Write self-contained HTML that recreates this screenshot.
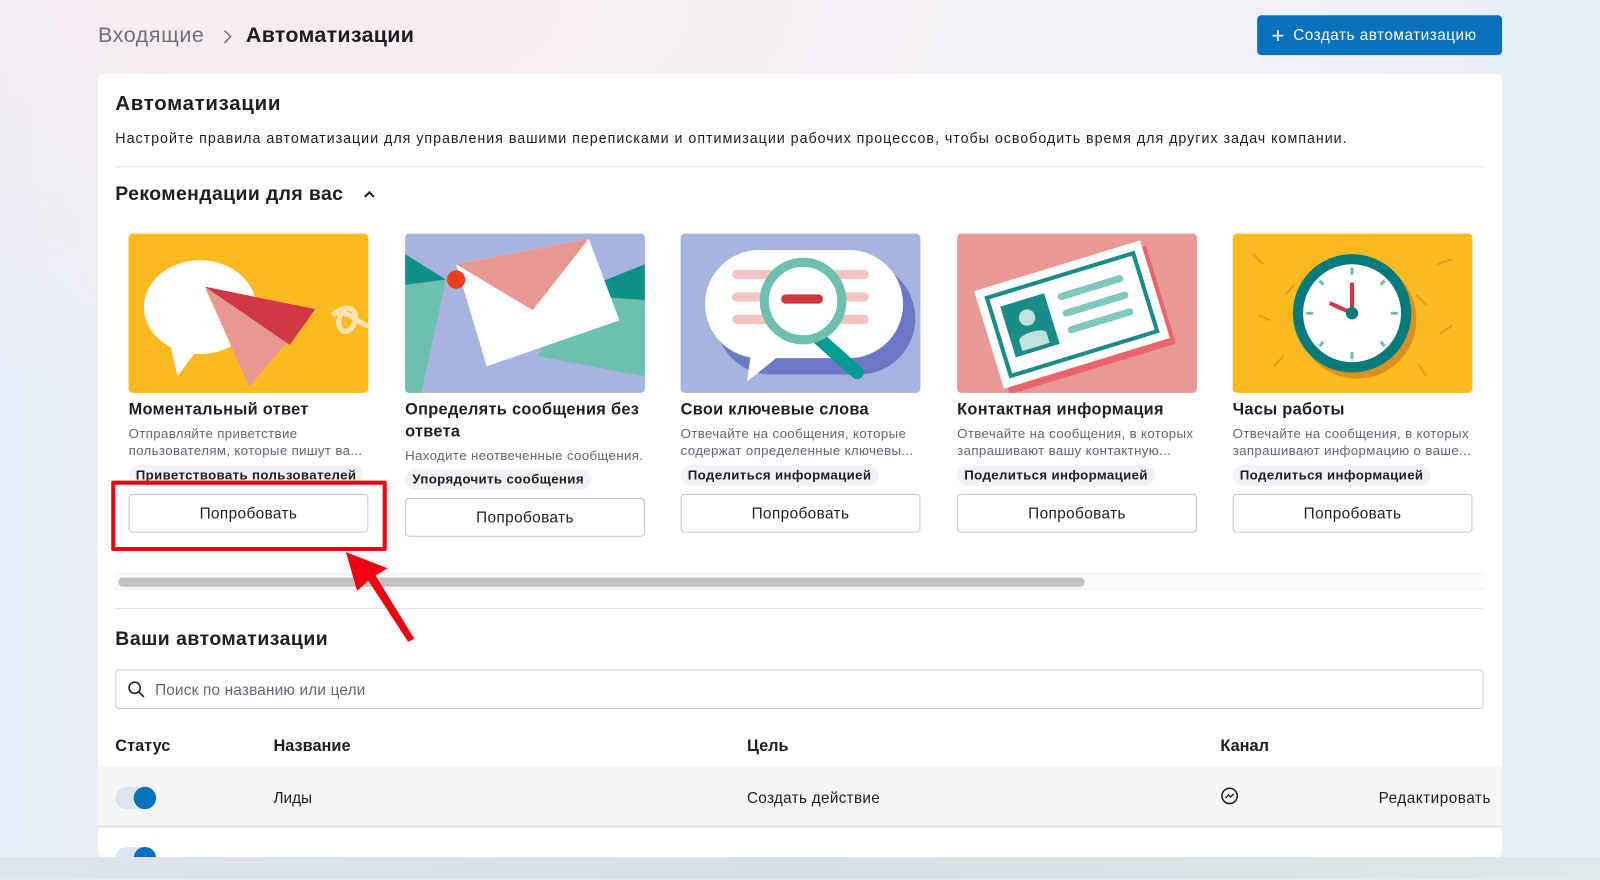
<!DOCTYPE html>
<html><head><meta charset="utf-8"><style>
*{box-sizing:border-box;margin:0;padding:0}
html,body{width:1600px;height:880px;overflow:hidden}
body{font-family:"Liberation Sans","Noto Sans CJK SC",sans-serif;color:#1c1e21;background:#eef2f8}
#s{position:absolute;left:0;top:0;width:1568px;height:862px;transform:scale(1.020408);transform-origin:0 0;overflow:hidden;
background:linear-gradient(90deg,#e6edf8 0%,#eff1f6 15%,#f1f1f5 80%,#e4eef4 100%)}
#bg1{position:absolute;left:0;top:0;width:1568px;height:862px;background:radial-gradient(ellipse 900px 400px at 300px 0px,rgba(248,236,240,1),rgba(248,236,240,0))}
.a{position:absolute;white-space:nowrap}
.card{position:absolute;left:96px;top:72px;width:1376px;height:768px;background:#fff;border-radius:6px;overflow:hidden}
.bot{position:absolute;left:0;top:840px;width:1568px;height:22px;background:linear-gradient(90deg,#dde4ec,#d6dfe6 50%,#dde8e8)}
.rc{position:absolute;width:235px}
.img{position:absolute;left:0;top:0;width:235px;height:156px;border-radius:4px;overflow:hidden}
.t{position:absolute;left:0;top:162px;font-size:16px;font-weight:bold;line-height:22px;white-space:normal;width:240px;letter-spacing:.3px}
.d{position:absolute;left:0;font-size:13px;color:#606770;line-height:17px;width:240px;letter-spacing:.35px}
.tag{position:absolute;left:0;height:20px;padding:0 7px;border-radius:10px;background:#f0f2f5;font-size:13px;font-weight:bold;line-height:20px;letter-spacing:.35px}
.btn{position:absolute;left:0;width:235px;height:38px;border:1px solid #bec3c9;border-radius:4px;font-size:15px;text-align:center;line-height:38px;background:#fff;letter-spacing:.4px}
</style></head><body><div id="s">
<div id="bg1"></div>
<div class="a" style="left:96px;top:23px;font-size:21px;color:#6e7177;letter-spacing:.6px">Входящие</div>
<svg class="a" style="left:217px;top:28px" width="12" height="16"><path d="M3 2l6 6-6 6" fill="none" stroke="#6e7177" stroke-width="1.5"/></svg>
<div class="a" style="left:241px;top:23px;font-size:21px;font-weight:bold;color:#1c1e21;letter-spacing:.3px">Автоматизации</div>
<div class="a" style="left:1232px;top:15px;width:240px;height:39px;background:#0a72bd;border-radius:4px;color:#fff;font-size:15px;line-height:39px;padding-left:14px;letter-spacing:.5px"><span style="font-size:22px;vertical-align:-3px;margin-right:8px">+</span>Создать автоматизацию</div>
<div class="card">
 <div class="a" style="left:17px;top:19px;font-size:20px;font-weight:bold;letter-spacing:.7px">Автоматизации</div>
 <div class="a" style="left:17px;top:55px;font-size:14px;color:#1c1e21;letter-spacing:.95px">Настройте правила автоматизации для управления вашими переписками и оптимизации рабочих процессов, чтобы освободить время для других задач компании.</div>
 <div class="a" style="left:17px;top:91px;width:1341px;height:1px;background:#dadde1"></div>
 <div class="a" style="left:17px;top:108px;font-size:19px;font-weight:bold;letter-spacing:.4px">Рекомендации для вас</div>
 <svg class="a" style="left:260px;top:114px" width="12" height="10"><path d="M1.5 7l4.5-4.5 4.5 4.5" fill="none" stroke="#1c1e21" stroke-width="2"/></svg>

 <div class="rc" style="left:30px;top:157px;height:300px">
  <div class="img" style="background:#fdb920"><svg width="235" height="156">
   <ellipse cx="70" cy="72" rx="55" ry="46" fill="#fff"/><path d="M40 105l8 35 22-30z" fill="#fff"/>
   <path d="M75 55l110 20-70 60z" fill="#ffcf7a" opacity=".8"/>
   <path d="M75 52l108 22-65 76z" fill="#e99891"/><path d="M75 52l108 22-25 35z" fill="#d13843"/>
   <path d="M200 80c10-10 25-10 22 5s-20 15-15-5c5-8 20 10 28 10" fill="none" stroke="#fde3b0" stroke-width="5"/>
  </svg></div>
  <div class="t">Моментальный ответ</div>
  <div class="d" style="top:187px">Отправляйте приветствие<br>пользователям, которые пишут ва...</div>
  <div class="tag" style="top:227px">Приветствовать пользователей</div>
  <div class="btn" style="top:255px">Попробовать</div>
 </div>
 <div class="rc" style="left:301px;top:157px;height:300px">
  <div class="img" style="background:#a7b4e0"><svg width="235" height="156">
   <path d="M0 20l40 25-25 115H0z" fill="#6dbfae"/><path d="M0 20l40 25L0 50z" fill="#0e8f88"/>
   <path d="M160 60l75-30v110l-105-20z" fill="#6dbfae"/><path d="M160 60l75-30v35z" fill="#0e8f88"/>
   <path d="M50 30l130-25 30 80-130 45z" fill="#fff"/><path d="M50 30l130-25-55 70z" fill="#e99891"/>
   <circle cx="50" cy="45" r="9" fill="#e8401c"/>
  </svg></div>
  <div class="t">Определять сообщения без ответа</div>
  <div class="d" style="top:209px">Находите неотвеченные сообщения.</div>
  <div class="tag" style="top:231px">Упорядочить сообщения</div>
  <div class="btn" style="top:259px">Попробовать</div>
 </div>
 <div class="rc" style="left:571px;top:157px;height:300px">
  <div class="img" style="background:#a7b4e0"><svg width="235" height="156">
   <rect x="26" y="20" width="196" height="110" rx="55" fill="#6b78c4" transform="translate(8,8)"/>
   <rect x="24" y="16" width="194" height="106" rx="53" fill="#fff"/><path d="M70 110l-5 35 35-28z" fill="#fff"/>
   <g stroke="#f4c4c2" stroke-width="9" stroke-linecap="round"><path d="M55 40h125M55 62h125M55 84h125"/></g>
   <path d="M128 96l45 40" stroke="#009c94" stroke-width="13" stroke-linecap="round"/>
   <circle cx="120" cy="66" r="38" fill="#fff" stroke="#6dbfae" stroke-width="9"/>
   <path d="M103 64h32" stroke="#d13843" stroke-width="9" stroke-linecap="round"/>
  </svg></div>
  <div class="t">Свои ключевые слова</div>
  <div class="d" style="top:187px">Отвечайте на сообщения, которые<br>содержат определенные ключевы...</div>
  <div class="tag" style="top:227px">Поделиться информацией</div>
  <div class="btn" style="top:255px">Попробовать</div>
 </div>
 <div class="rc" style="left:842px;top:157px;height:300px">
  <div class="img" style="background:#e99893"><svg width="235" height="156">
   <g transform="rotate(-17 117 80)">
   <rect x="32" y="35" width="170" height="100" fill="#e8656b"/>
   <rect x="28" y="28" width="170" height="100" fill="#fff"/>
   <rect x="38" y="38" width="150" height="80" fill="none" stroke="#1a8c88" stroke-width="4"/>
   <rect x="48" y="50" width="45" height="52" fill="#1a8c88"/>
   <circle cx="70" cy="68" r="8" fill="#bfe2db"/><path d="M56 98v-10c0-7 28-7 28 0v10z" fill="#bfe2db"/>
   <g stroke="#7fc8bc" stroke-width="7" stroke-linecap="round"><path d="M108 58h60M108 75h60M108 92h60"/></g></g>
  </svg></div>
  <div class="t">Контактная информация</div>
  <div class="d" style="top:187px">Отвечайте на сообщения, в которых<br>запрашивают вашу контактную...</div>
  <div class="tag" style="top:227px">Поделиться информацией</div>
  <div class="btn" style="top:255px">Попробовать</div>
 </div>
 <div class="rc" style="left:1112px;top:157px;height:300px">
  <div class="img" style="background:#fdb920"><svg width="235" height="156">
   <g stroke="#d9922a" stroke-width="2" fill="none" opacity=".8"><path d="M20 20l10 10M25 80l12 5M200 30l15-5M215 90l-12 8M40 130l10-10M190 140l-8-12M60 50l-8 10M180 60l10 10"/></g>
   <circle cx="122" cy="84" r="58" fill="#d9901e"/>
   <circle cx="117" cy="78" r="58" fill="#017b7b"/>
   <circle cx="117" cy="78" r="48" fill="#fff"/>
   <g stroke="#6dbfae" stroke-width="3"><path d="M117 33v7M117 116v7M72 78h7M155 78h7M85 46l4 4M149 46l-4 4M85 110l4-4M149 110l-4-4"/></g>
   <path d="M117 78V48M117 78l-22-10" stroke="#d13843" stroke-width="4"/>
   <circle cx="117" cy="78" r="6" fill="#017b7b"/>
  </svg></div>
  <div class="t">Часы работы</div>
  <div class="d" style="top:187px">Отвечайте на сообщения, в которых<br>запрашивают информацию о ваше...</div>
  <div class="tag" style="top:227px">Поделиться информацией</div>
  <div class="btn" style="top:255px">Попробовать</div>
 </div>

 <div class="a" style="left:17px;top:490px;width:1341px;height:16px;border-top:1px solid #eee;border-bottom:1px solid #eee;background:#fafafa"></div>
 <div class="a" style="left:20px;top:494px;width:947px;height:9px;border-radius:5px;background:#c1c1c1"></div>
 <div class="a" style="left:17px;top:524px;width:1341px;height:1px;background:#dadde1"></div>
 <div class="a" style="left:17px;top:544px;font-size:19px;font-weight:bold;letter-spacing:.5px">Ваши автоматизации</div>
 <div class="a" style="left:17px;top:584px;width:1341px;height:39px;border:1px solid #ccd0d5;border-radius:4px"></div>
 <svg class="a" style="left:29px;top:595px" width="18" height="18"><circle cx="7" cy="7" r="5.5" fill="none" stroke="#1c1e21" stroke-width="1.5"/><path d="M11 11l5 5" stroke="#1c1e21" stroke-width="1.5"/></svg>
 <div class="a" style="left:56px;top:596px;font-size:15px;color:#606770;letter-spacing:.2px">Поиск по названию или цели</div>
 <div class="a" style="left:17px;top:651px;font-size:16px;font-weight:bold">Статус</div>
 <div class="a" style="left:172px;top:651px;font-size:16px;font-weight:bold">Название</div>
 <div class="a" style="left:636px;top:651px;font-size:16px;font-weight:bold">Цель</div>
 <div class="a" style="left:1100px;top:651px;font-size:16px;font-weight:bold">Канал</div>
 <div class="a" style="left:0;top:679px;width:1376px;height:60px;background:#f5f5f5;border-bottom:2px solid #dfe3e8"></div>
 <div class="a" style="left:17px;top:699px;width:40px;height:22px;border-radius:11px;background:#dce6f0"></div>
 <div class="a" style="left:35px;top:699px;width:22px;height:22px;border-radius:11px;background:#0a72bd"></div>
 <div class="a" style="left:172px;top:702px;font-size:15px">Лиды</div>
 <div class="a" style="left:636px;top:702px;font-size:15px;letter-spacing:.3px">Создать действие</div>
 <svg class="a" style="left:1100px;top:699px" width="18" height="18"><circle cx="9" cy="9" r="7.5" fill="none" stroke="#1c1e21" stroke-width="1.5"/><path d="M5 11l3-3 2 2 3-3" fill="none" stroke="#1c1e21" stroke-width="1.3"/></svg>
 <div class="a" style="left:1255px;top:702px;font-size:15px;letter-spacing:.5px">Редактировать</div>
 <div class="a" style="left:17px;top:758px;width:40px;height:22px;border-radius:11px;background:#dce6f0"></div>
 <div class="a" style="left:35px;top:758px;width:22px;height:22px;border-radius:11px;background:#0a72bd"></div>
</div>
<div class="bot"></div>
<div class="a" style="left:109px;top:471px;width:270px;height:69px;border:4px solid #f0000e;border-radius:2px"></div>
<svg class="a" style="left:330px;top:535px" width="90" height="100"><path d="M9 6L50 22 38 29 76 91 70 94 31 34 20 44z" fill="#f0000e"/></svg>
</div></body></html>
